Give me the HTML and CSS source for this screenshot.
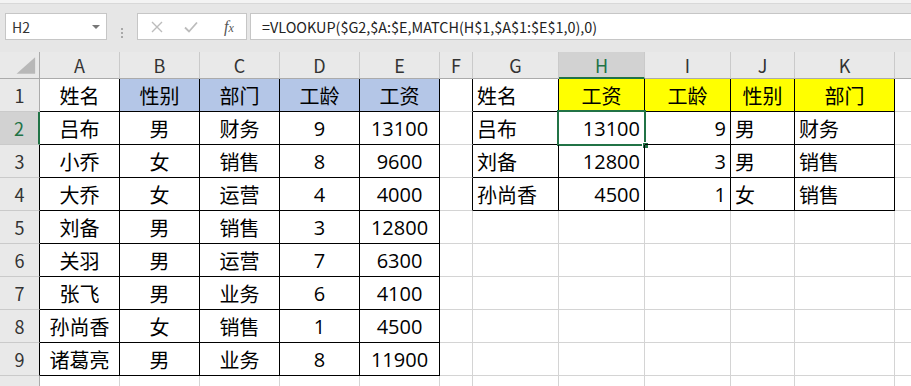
FILE: index.html
```html
<!DOCTYPE html>
<html lang="zh-CN">
<head>
  <meta charset="UTF-8" />
  <title>VLOOKUP + MATCH</title>
  <link rel="stylesheet" href="styles.css">
</head>
<body>

  <!-- Formula bar -->
  <div class="top-edge"></div>
  <div class="formula-bar">
    <div class="name-box">
      <span>H2</span>
      <span class="caret"></span>
    </div>
    <div class="grip"><i></i><i></i><i></i></div>
    <div class="fx-buttons">
      <span class="fx-btn">
        <svg width="12" height="12" viewBox="0 0 12 12"><path d="M1 1L11 11M11 1L1 11" stroke="#bcbcbc" stroke-width="1.4" fill="none"/></svg>
      </span>
      <span class="fx-btn">
        <svg width="14" height="12" viewBox="0 0 14 12"><path d="M1 6.5L5 10.5L13 1.5" stroke="#bcbcbc" stroke-width="1.8" fill="none"/></svg>
      </span>
      <span class="fx-btn fx-label"><i>f</i><i class="x">x</i></span>
    </div>
    <div class="formula-input">=VLOOKUP($G2,$A:$E,MATCH(H$1,$A$1:$E$1,0),0)</div>
  </div>

  <!-- Sheet grid -->
  <div class="sheet">
    <!-- column headers -->
    <div class="hd corner"><svg width="40" height="27" viewBox="0 0 40 27"><polygon points="36,5 36,22 17,22" fill="#b8b8b8"/></svg></div>
    <div class="hd">A</div>
    <div class="hd">B</div>
    <div class="hd">C</div>
    <div class="hd">D</div>
    <div class="hd">E</div>
    <div class="hd">F</div>
    <div class="hd">G</div>
    <div class="hd sel">H</div>
    <div class="hd">I</div>
    <div class="hd">J</div>
    <div class="hd">K</div>
    <div class="hd"></div>

    <!-- row 1 -->
    <div class="rh">1</div>
    <div class="c ctr bd">姓名</div>
    <div class="c ctr bd blue">性别</div>
    <div class="c ctr bd blue">部门</div>
    <div class="c ctr bd blue">工龄</div>
    <div class="c ctr bd blue">工资</div>
    <div class="c edge"></div>
    <div class="c bd">姓名</div>
    <div class="c ctr bd yel">工资</div>
    <div class="c ctr bd yel">工龄</div>
    <div class="c ctr bd yel">性别</div>
    <div class="c ctr bd yel">部门</div>
    <div class="c"></div>

    <!-- row 2 -->
    <div class="rh sel">2</div>
    <div class="c ctr bd">吕布</div>
    <div class="c ctr bd">男</div>
    <div class="c ctr bd">财务</div>
    <div class="c ctr bd">9</div>
    <div class="c ctr bd">13100</div>
    <div class="c edge"></div>
    <div class="c bd">吕布</div>
    <div class="c rt bd active">13100<span class="outline"><span class="handle"></span></span></div>
    <div class="c rt bd">9</div>
    <div class="c bd">男</div>
    <div class="c bd">财务</div>
    <div class="c"></div>

    <!-- row 3 -->
    <div class="rh dark">3</div>
    <div class="c ctr bd">小乔</div>
    <div class="c ctr bd">女</div>
    <div class="c ctr bd">销售</div>
    <div class="c ctr bd">8</div>
    <div class="c ctr bd">9600</div>
    <div class="c edge"></div>
    <div class="c bd">刘备</div>
    <div class="c rt bd">12800</div>
    <div class="c rt bd">3</div>
    <div class="c bd">男</div>
    <div class="c bd">销售</div>
    <div class="c"></div>

    <!-- row 4 -->
    <div class="rh dark">4</div>
    <div class="c ctr bd">大乔</div>
    <div class="c ctr bd">女</div>
    <div class="c ctr bd">运营</div>
    <div class="c ctr bd">4</div>
    <div class="c ctr bd">4000</div>
    <div class="c edge"></div>
    <div class="c bd">孙尚香</div>
    <div class="c rt bd">4500</div>
    <div class="c rt bd">1</div>
    <div class="c bd">女</div>
    <div class="c bd">销售</div>
    <div class="c"></div>

    <!-- row 5 -->
    <div class="rh dark">5</div>
    <div class="c ctr bd">刘备</div>
    <div class="c ctr bd">男</div>
    <div class="c ctr bd">销售</div>
    <div class="c ctr bd">3</div>
    <div class="c ctr bd">12800</div>
    <div class="c"></div>
    <div class="c"></div>
    <div class="c"></div>
    <div class="c"></div>
    <div class="c"></div>
    <div class="c"></div>
    <div class="c"></div>

    <!-- row 6 -->
    <div class="rh dark">6</div>
    <div class="c ctr bd">关羽</div>
    <div class="c ctr bd">男</div>
    <div class="c ctr bd">运营</div>
    <div class="c ctr bd">7</div>
    <div class="c ctr bd">6300</div>
    <div class="c"></div>
    <div class="c"></div>
    <div class="c"></div>
    <div class="c"></div>
    <div class="c"></div>
    <div class="c"></div>
    <div class="c"></div>

    <!-- row 7 -->
    <div class="rh dark">7</div>
    <div class="c ctr bd">张飞</div>
    <div class="c ctr bd">男</div>
    <div class="c ctr bd">业务</div>
    <div class="c ctr bd">6</div>
    <div class="c ctr bd">4100</div>
    <div class="c"></div>
    <div class="c"></div>
    <div class="c"></div>
    <div class="c"></div>
    <div class="c"></div>
    <div class="c"></div>
    <div class="c"></div>

    <!-- row 8 -->
    <div class="rh dark">8</div>
    <div class="c ctr bd">孙尚香</div>
    <div class="c ctr bd">女</div>
    <div class="c ctr bd">销售</div>
    <div class="c ctr bd">1</div>
    <div class="c ctr bd">4500</div>
    <div class="c"></div>
    <div class="c"></div>
    <div class="c"></div>
    <div class="c"></div>
    <div class="c"></div>
    <div class="c"></div>
    <div class="c"></div>

    <!-- row 9 -->
    <div class="rh dark">9</div>
    <div class="c ctr bd">诸葛亮</div>
    <div class="c ctr bd">男</div>
    <div class="c ctr bd">业务</div>
    <div class="c ctr bd">8</div>
    <div class="c ctr bd">11900</div>
    <div class="c"></div>
    <div class="c"></div>
    <div class="c"></div>
    <div class="c"></div>
    <div class="c"></div>
    <div class="c"></div>
    <div class="c"></div>

    <!-- row 10 -->
    <div class="rh">10</div>
    <div class="c"></div>
    <div class="c"></div>
    <div class="c"></div>
    <div class="c"></div>
    <div class="c"></div>
    <div class="c"></div>
    <div class="c"></div>
    <div class="c"></div>
    <div class="c"></div>
    <div class="c"></div>
    <div class="c"></div>
    <div class="c"></div>
  </div>

</body>
</html>
```

FILE: styles.css
```css
* {
  box-sizing: border-box;
  margin: 0;
  padding: 0;
}

body {
  width: 911px;
  height: 386px;
  overflow: hidden;
  background: #fff;
  font-family: "Noto Sans CJK SC", sans-serif;
  color: #000;
}

/* Formula bar */
.top-edge {
  height: 4px;
  background: #f3f3f3;
  border-bottom: 1px solid #d8d8d8;
}

.formula-bar {
  display: flex;
  height: 48px;
  padding: 9px 0 0 5px;
  background: #e6e6e6;
}

.name-box,
.fx-buttons,
.formula-input {
  height: 27px;
  background: #fff;
  border: 1px solid #c6c6c6;
}

.name-box {
  width: 102px;
  display: flex;
  align-items: center;
  justify-content: space-between;
  padding: 0 6px 0 6px;
  font-size: 14px;
  color: #333;
}

.caret {
  width: 0;
  height: 0;
  border-left: 4px solid transparent;
  border-right: 4px solid transparent;
  border-top: 4px solid #777;
}

.grip {
  width: 30px;
  display: flex;
  flex-direction: column;
  align-items: center;
  justify-content: center;
  gap: 2px;
}

.grip i {
  width: 2px;
  height: 2px;
  background: #a8a8a8;
}

.fx-buttons {
  width: 110px;
  display: flex;
  align-items: center;
  padding-left: 7px;
}

.fx-btn {
  display: flex;
  align-items: center;
  justify-content: center;
  width: 24px;
  margin-right: 10px;
}

.fx-label {
  margin-right: 0;
  margin-left: 4px;
  font-family: "Liberation Serif", serif;
  font-size: 16px;
  color: #555;
}

.fx-label .x {
  font-size: 12px;
  margin-top: 4px;
}

.formula-input {
  flex: 1;
  margin-left: 3px;
  border-right: none;
  display: flex;
  align-items: center;
  padding-left: 11px;
  font-size: 14.4px;
  color: #222;
  white-space: nowrap;
}

/* Sheet grid */
.sheet {
  display: grid;
  grid-template-columns: 40px repeat(5, 80px) 33px 86px 86px 86px 64px 100px 60px;
  grid-template-rows: 27px repeat(10, 33px);
}

.hd {
  display: flex;
  align-items: center;
  justify-content: center;
  background: #e9e9e9;
  border-right: 1px solid #cacaca;
  border-bottom: 1px solid #ababab;
  font-size: 18px;
  color: #333;
}

.hd.corner {
  border-right-color: #ababab;
}

.hd.sel {
  background: #d2d2d2;
  color: #217346;
  border-bottom: 2px solid #217346;
}

.rh {
  display: flex;
  align-items: center;
  justify-content: center;
  background: #e9e9e9;
  border-right: 1px solid #ababab;
  border-bottom: 1px solid #cacaca;
  font-size: 18px;
  color: #333;
}

.rh.dark {
  border-right-color: #000;
}

.rh.sel {
  background: #d2d2d2;
  color: #217346;
  border-right: 2px solid #217346;
}

.c {
  position: relative;
  display: flex;
  align-items: center;
  padding: 0 4px;
  border-right: 1px solid #d4d4d4;
  border-bottom: 1px solid #d4d4d4;
  font-family: "Open Sans", "Noto Sans CJK SC", sans-serif;
  font-size: 20px;
  white-space: nowrap;
}

.ctr {
  justify-content: center;
}

.rt {
  justify-content: flex-end;
}

.bd {
  border-right-color: #000;
  border-bottom-color: #000;
}

.edge {
  border-right-color: #000;
}

.blue {
  background: #b4c6e7;
}

.yel {
  background: #ffff00;
}

/* Active cell selection */
.outline {
  position: absolute;
  inset: -2px;
  border: 2px solid #217346;
}

.handle {
  position: absolute;
  right: -5px;
  bottom: -5px;
  width: 7px;
  height: 7px;
  background: #217346;
  border: 1px solid #fff;
}
```
